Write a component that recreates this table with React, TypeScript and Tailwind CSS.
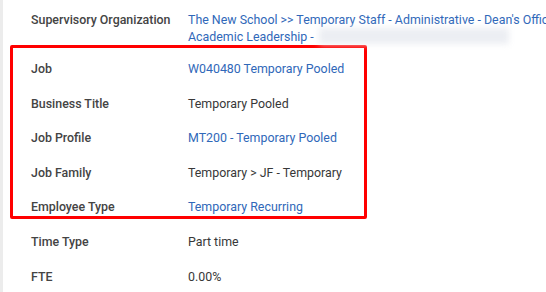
type RowProps = {
  label: string
  value: string
  link?: boolean
}

function Row({ label, value, link = false }: RowProps) {
  return (
    <div className="flex leading-[17px]">
      <div className="w-[157px] shrink-0 font-medium text-[#444444]">{label}</div>
      <div className={link ? 'whitespace-nowrap text-[#3068b9]' : 'whitespace-nowrap text-[#383838]'}>
        {value}
      </div>
    </div>
  )
}

export default function App() {
  return (
    <div className="flex h-[292px] w-[546px] overflow-hidden bg-white font-['Roboto',sans-serif] text-[12.4px]">
      <div className="w-[3px] shrink-0 bg-[#ececec]" />
      <div className="flex min-w-0 flex-1 flex-col overflow-hidden pt-[10.5px]">
        <div className="flex pl-[28px] leading-[17px]">
          <div className="w-[157px] shrink-0 font-medium text-[#444444]">Supervisory Organization</div>
          <div className="flex min-w-0 flex-col whitespace-nowrap text-[#3068b9]">
            <span>The New School &gt;&gt; Temporary Staff - Administrative - Dean's Office</span>
            <span className="flex items-center">
              Academic Leadership -
              <span className="ml-[5px] inline-block h-[16px] w-[190px] bg-[#eceef3] blur-[3px]" />
            </span>
          </div>
        </div>

        <div className="ml-[7px] mr-auto flex w-[357px] flex-col gap-[17.5px] rounded-[2px] border-[3px] border-[#ff0000] pb-[0.5px] pl-[18px] pt-[12.5px]">
          <Row label="Job" value="W040480 Temporary Pooled" link />
          <Row label="Business Title" value="Temporary Pooled" />
          <Row label="Job Profile" value="MT200 - Temporary Pooled" link />
          <Row label="Job Family" value="Temporary > JF - Temporary" />
          <Row label="Employee Type" value="Temporary Recurring" link />
        </div>

        <div className="mt-[14.5px] flex flex-col gap-[17.5px] pl-[28px]">
          <Row label="Time Type" value="Part time" />
          <Row label="FTE" value="0.00%" />
        </div>
      </div>
    </div>
  )
}
